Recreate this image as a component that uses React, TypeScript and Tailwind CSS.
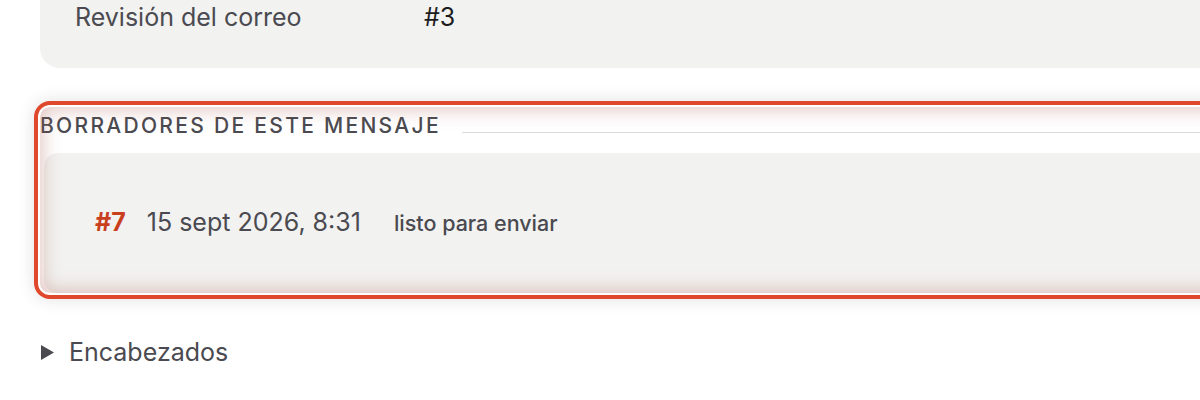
const App = () => {
  return (
    <div className="w-[1200px] h-[400px] overflow-hidden bg-white font-['Inter',sans-serif]">
      <div className="w-[1500px] pl-[40px] pt-0">
        {/* summary card, scrolled so only its last row shows */}
        <div className="bg-[#f2f2f0] rounded-bl-[20px] h-[68px] pl-[35px] pt-[2px] flex items-start">
          <div className="flex items-center text-[25px] leading-[30px]">
            <span className="w-[349px] text-[#4a4a50]">Revisión del correo</span>
            <span className="text-[#1c1c1e]">#3</span>
          </div>
        </div>

        {/* drafts section, highlighted */}
        <section className="relative mt-[39px] rounded-[10px] bg-white shadow-[0_0_0_2px_#ffffff,0_0_0_6px_#e0482b,0_0_18px_6px_rgba(0,0,0,0.12)]">
          <div className="flex items-end gap-[21px] pt-[6px]">
            <h2 className="text-[21px] leading-[25px] font-medium tracking-[2.3px] text-[#4a4a50] whitespace-nowrap">
              BORRADORES DE ESTE MENSAJE
            </h2>
            <div className="flex-1 border-b-[1.5px] border-[#dcdcdc] mb-[5px]" />
          </div>
          <div className="mt-[15px] ml-[4px] bg-[#f2f2f0] rounded-l-[14px] h-[140px] flex items-center pl-[51px] gap-[21px]">
            <span className="text-[25px] font-bold text-[#c9401f]">#7</span>
            <span className="text-[25px] text-[#4a4a50]">15 sept 2026, 8:31</span>
            <span className="ml-[12px] text-[21.5px] font-medium text-[#4a4a50]">listo para enviar</span>
          </div>
          <div className="pointer-events-none absolute inset-0 rounded-[10px] shadow-[inset_0_0_18px_3px_rgba(170,90,80,0.34)]" />
        </section>

        <div className="mt-[44px] flex items-center gap-[15px] text-[#4a4a50]">
          <svg width="13" height="15" viewBox="0 0 13 15" className="shrink-0 ml-[1px]">
            <path d="M0 0 L13 7.5 L0 15 Z" fill="#4a4a50" />
          </svg>
          <span className="text-[25px] leading-[30px]">Encabezados</span>
        </div>
      </div>
    </div>
  );
};

export default App;
